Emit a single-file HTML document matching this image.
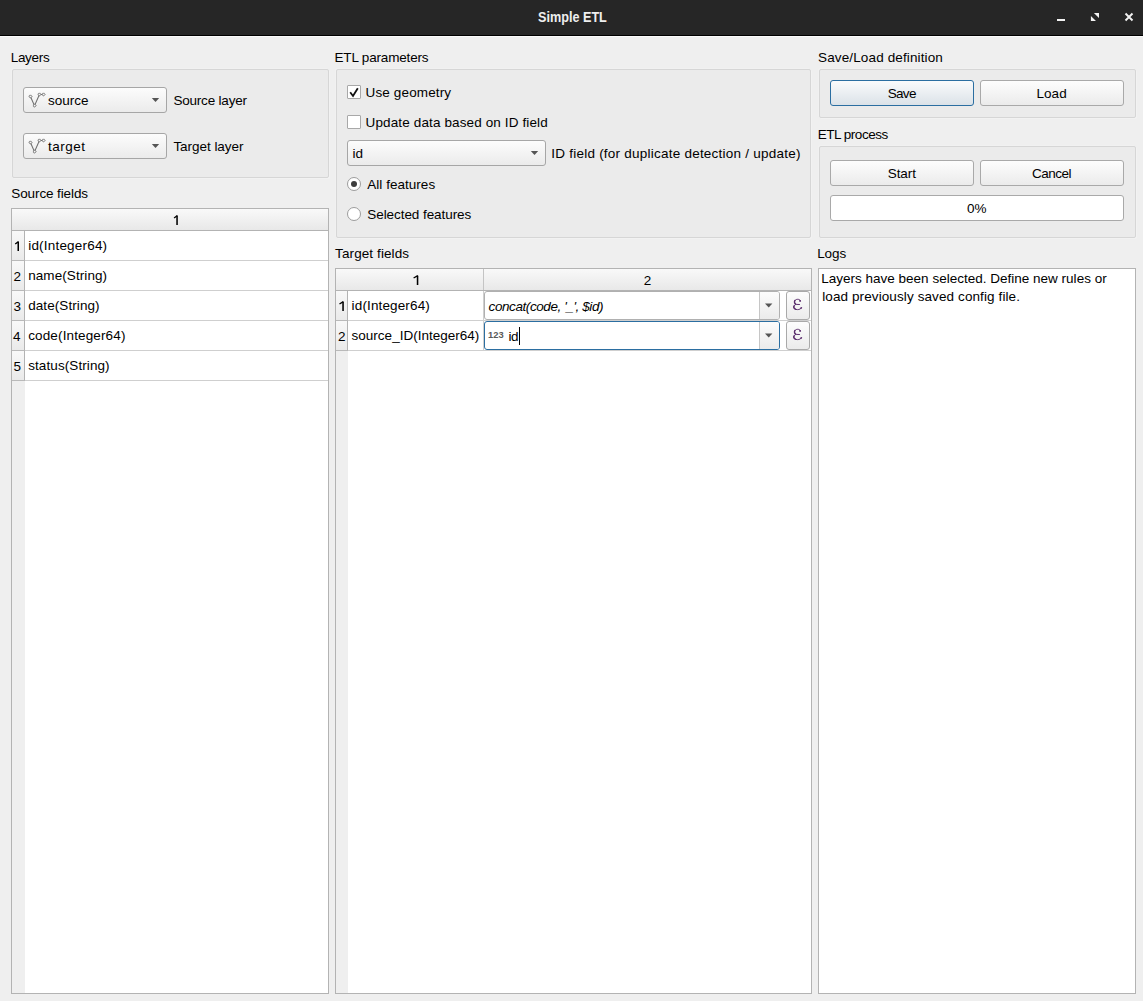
<!DOCTYPE html>
<html><head><meta charset="utf-8">
<style>
*{box-sizing:border-box;margin:0;padding:0}
html,body{width:1143px;height:1001px;overflow:hidden;background:#efefef;font-family:"Liberation Sans",sans-serif;color:#000}
.a{position:absolute}
.t{position:absolute;font-size:13.5px;line-height:16px;white-space:nowrap;color:#000}
.gb{position:absolute;background:#ebebeb;border:1px solid #d6d6d6;border-radius:2px;box-shadow:-1px -1px 0 #f1f1f1,1px 1px 0 #f2f2f2}
.combo{position:absolute;border:1px solid #a6a6a6;border-radius:3px;background:linear-gradient(#fcfcfc,#ebebeb)}
.arrow{position:absolute;width:0;height:0;border-left:4px solid transparent;border-right:4px solid transparent;border-top:4px solid #4e4e4e}
.btn{position:absolute;border:1px solid #a9a9a9;border-radius:3px;background:linear-gradient(#fdfdfd,#ebebeb)}
.chk{position:absolute;width:14px;height:14px;border:1px solid #a8a8a8;border-radius:1px;background:#fff}
.radio{position:absolute;width:14px;height:14px;border:1px solid #9c9c9c;border-radius:50%;background:#fff}
.tbl{position:absolute;border:1px solid #b3b3b3;background:#fff}
.hdr{position:absolute;background:linear-gradient(#f9f9f9,#e8e8e8);border-bottom:1px solid #b3b3b3}
.rh{position:absolute;background:linear-gradient(#f8f8f8,#eaeaea);border-right:1px solid #b3b3b3;border-bottom:1px solid #b9b9b9}
.hl{position:absolute;height:1px;background:#cfcfcf}
.vl{position:absolute;width:1px;background:#cfcfcf}
</style></head><body>
<div class="a" style="left:0;top:0;width:1143px;height:35px;background:#262626"></div>
<div class="a" style="left:0;top:35px;width:1143px;height:1px;background:#000"></div>
<div class="a" style="left:0;top:36px;width:1143px;height:1px;background:#fbfbfb"></div>
<div class="t" style="left:538.30px;top:9px;font-size:15px;line-height:16px;transform:scaleX(0.8428);transform-origin:0.00px 0;font-weight:bold;color:#eeeeee;">Simple ETL</div>
<div class="a" style="left:1057px;top:19px;width:8px;height:2px;background:#f2f2f2"></div>
<svg class="a" style="left:1090px;top:12px" width="10" height="10" viewBox="0 0 10 10"><path d="M3.9 1.1H9V6.1Z M0.9 3.9V8.9H6Z" fill="#f4f4f4"/></svg>
<svg class="a" style="left:1124px;top:12px" width="10" height="10" viewBox="0 0 10 10"><path d="M1.5 1.5L8.5 8.5M8.5 1.5L1.5 8.5" stroke="#f2f2f2" stroke-width="1.9" fill="none"/></svg>
<div class="t" style="left:10.70px;top:50px;font-size:13.5px;line-height:16px;letter-spacing:-0.294px;">Layers</div>
<div class="gb" style="left:12px;top:69px;width:317px;height:109px"></div>
<div class="combo" style="left:23px;top:87px;width:144px;height:26px"></div>
<svg class="a" style="left:28px;top:92px" width="18" height="16" viewBox="0 0 18 16"><path d="M2.44 4.44L6.5 13.6L11.44 2.44L15.5 2.44" stroke="#6e6e6e" stroke-width="1.05" fill="none"/><path d="M0.89 4.44L2.44 2.89L3.99 4.44L2.44 5.99ZM4.95 13.60L6.50 12.05L8.05 13.60L6.50 15.15ZM9.89 2.44L11.44 0.89L12.99 2.44L11.44 3.99ZM13.95 2.44L15.50 0.89L17.05 2.44L15.50 3.99Z" stroke="#6e6e6e" stroke-width="1" fill="#f6f6f6"/></svg>
<div class="t" style="left:48.10px;top:93px;font-size:13.5px;line-height:16px;letter-spacing:-0.002px;">source</div>
<svg class="a" style="left:150px;top:96px" width="10" height="7"><path d="M1.80 1.95H9.20L5.50 6.05Z" fill="#555555"/></svg>
<div class="t" style="left:173.40px;top:93px;font-size:13.5px;line-height:16px;letter-spacing:-0.199px;">Source layer</div>
<div class="combo" style="left:23px;top:133px;width:144px;height:26px"></div>
<svg class="a" style="left:28px;top:138px" width="18" height="16" viewBox="0 0 18 16"><path d="M2.44 4.44L6.5 13.6L11.44 2.44L15.5 2.44" stroke="#6e6e6e" stroke-width="1.05" fill="none"/><path d="M0.89 4.44L2.44 2.89L3.99 4.44L2.44 5.99ZM4.95 13.60L6.50 12.05L8.05 13.60L6.50 15.15ZM9.89 2.44L11.44 0.89L12.99 2.44L11.44 3.99ZM13.95 2.44L15.50 0.89L17.05 2.44L15.50 3.99Z" stroke="#6e6e6e" stroke-width="1" fill="#f6f6f6"/></svg>
<div class="t" style="left:48.10px;top:139px;font-size:13.5px;line-height:16px;letter-spacing:0.466px;">target</div>
<svg class="a" style="left:150px;top:142px" width="10" height="7"><path d="M1.80 1.95H9.20L5.50 6.05Z" fill="#555555"/></svg>
<div class="t" style="left:173.40px;top:139px;font-size:13.5px;line-height:16px;letter-spacing:-0.040px;">Target layer</div>
<div class="t" style="left:11.30px;top:186px;font-size:13.5px;line-height:16px;letter-spacing:-0.108px;">Source fields</div>
<div class="tbl" style="left:11px;top:208px;width:318px;height:786px"></div>
<div class="a" style="left:12px;top:231px;width:13px;height:762px;background:#efefef"></div>
<div class="hdr" style="left:12px;top:209px;width:316px;height:22px"></div>
<svg class="a" style="left:172px;top:214px" width="9" height="13"><path d="M5.05 1.70V11.00" stroke="#000" stroke-width="1.55" fill="none"/><path d="M2.10 4.00L5.35 1.60" stroke="#000" stroke-width="1.3" fill="none"/></svg>
<div class="rh" style="left:12px;top:231px;width:13px;height:30px"></div>
<div class="hl" style="left:25px;top:260px;width:303px"></div>
<svg class="a" style="left:13px;top:240px" width="9" height="13"><path d="M5.25 1.70V11.00" stroke="#000" stroke-width="1.55" fill="none"/><path d="M2.20 4.00L5.55 1.60" stroke="#000" stroke-width="1.3" fill="none"/></svg>
<div class="t" style="left:28.20px;top:238px;font-size:13.5px;line-height:16px;letter-spacing:0.196px;">id(Integer64)</div>
<div class="rh" style="left:12px;top:261px;width:13px;height:30px"></div>
<div class="hl" style="left:25px;top:290px;width:303px"></div>
<div class="t" style="left:13.55px;top:269px;font-size:13.5px;line-height:16px;">2</div>
<div class="t" style="left:28.20px;top:268px;font-size:13.5px;line-height:16px;letter-spacing:0.079px;">name(String)</div>
<div class="rh" style="left:12px;top:291px;width:13px;height:30px"></div>
<div class="hl" style="left:25px;top:320px;width:303px"></div>
<div class="t" style="left:13.55px;top:299px;font-size:13.5px;line-height:16px;">3</div>
<div class="t" style="left:28.20px;top:298px;font-size:13.5px;line-height:16px;letter-spacing:0.078px;">date(String)</div>
<div class="rh" style="left:12px;top:321px;width:13px;height:30px"></div>
<div class="hl" style="left:25px;top:350px;width:303px"></div>
<div class="t" style="left:13.05px;top:329px;font-size:13.5px;line-height:16px;">4</div>
<div class="t" style="left:28.20px;top:328px;font-size:13.5px;line-height:16px;letter-spacing:0.135px;">code(Integer64)</div>
<div class="rh" style="left:12px;top:351px;width:13px;height:30px"></div>
<div class="hl" style="left:25px;top:380px;width:303px"></div>
<div class="t" style="left:13.55px;top:359px;font-size:13.5px;line-height:16px;">5</div>
<div class="t" style="left:28.20px;top:358px;font-size:13.5px;line-height:16px;letter-spacing:0.086px;">status(String)</div>
<div class="t" style="left:334.50px;top:50px;font-size:13.5px;line-height:16px;letter-spacing:-0.172px;">ETL parameters</div>
<div class="gb" style="left:336px;top:69px;width:475px;height:169px"></div>
<div class="chk" style="left:347px;top:85px"></div>
<svg class="a" style="left:347px;top:85px" width="14" height="14" viewBox="0 0 14 14"><path d="M3.2 7.2L6 11L10.8 3.2" stroke="#111" stroke-width="1.8" fill="none"/></svg>
<div class="t" style="left:365.60px;top:85px;font-size:13.5px;line-height:16px;letter-spacing:0.129px;">Use geometry</div>
<div class="chk" style="left:347px;top:115px"></div>
<div class="t" style="left:365.60px;top:115px;font-size:13.5px;line-height:16px;letter-spacing:0.124px;">Update data based on ID field</div>
<div class="combo" style="left:347px;top:140px;width:199px;height:26px"></div>
<div class="t" style="left:352.50px;top:146px;font-size:13.5px;line-height:16px;">id</div>
<svg class="a" style="left:529px;top:149px" width="10" height="7"><path d="M1.80 1.90H9.20L5.50 6.00Z" fill="#555555"/></svg>
<div class="t" style="left:551.30px;top:146px;font-size:13.5px;line-height:16px;letter-spacing:0.231px;">ID field (for duplicate detection / update)</div>
<div class="radio" style="left:347px;top:177px"></div>
<div class="a" style="left:351px;top:181px;width:6px;height:6px;border-radius:50%;background:#3d3d3d"></div>
<div class="t" style="left:367.30px;top:177px;font-size:13.5px;line-height:16px;letter-spacing:0.029px;">All features</div>
<div class="radio" style="left:347px;top:207px"></div>
<div class="t" style="left:367.30px;top:207px;font-size:13.5px;line-height:16px;letter-spacing:-0.070px;">Selected features</div>
<div class="t" style="left:335.10px;top:246px;font-size:13.5px;line-height:16px;letter-spacing:0.097px;">Target fields</div>
<div class="tbl" style="left:335px;top:268px;width:477px;height:726px"></div>
<div class="a" style="left:336px;top:291px;width:12px;height:702px;background:#efefef"></div>
<div class="hdr" style="left:336px;top:269px;width:475px;height:22px"></div>
<div class="vl" style="left:483px;top:269px;height:21px;background:#c4c4c4"></div>
<svg class="a" style="left:412px;top:274px" width="9" height="13"><path d="M5.55 1.70V11.00" stroke="#000" stroke-width="1.55" fill="none"/><path d="M1.60 4.00L5.85 1.60" stroke="#000" stroke-width="1.3" fill="none"/></svg>
<div class="t" style="left:643.80px;top:273px;font-size:13.5px;line-height:16px;">2</div>
<div class="rh" style="left:336px;top:291px;width:12px;height:30px"></div>
<div class="hl" style="left:348px;top:320px;width:463px"></div>
<div class="vl" style="left:483px;top:291px;height:29px"></div>
<svg class="a" style="left:338px;top:300px" width="9" height="13"><path d="M5.05 1.70V11.00" stroke="#000" stroke-width="1.55" fill="none"/><path d="M1.50 4.00L5.35 1.60" stroke="#000" stroke-width="1.3" fill="none"/></svg>
<div class="t" style="left:351.60px;top:298px;font-size:13.5px;line-height:16px;letter-spacing:0.138px;">id(Integer64)</div>
<div class="rh" style="left:336px;top:321px;width:12px;height:30px"></div>
<div class="hl" style="left:348px;top:350px;width:463px"></div>
<div class="vl" style="left:483px;top:321px;height:29px"></div>
<div class="t" style="left:338.00px;top:329px;font-size:13.5px;line-height:16px;">2</div>
<div class="t" style="left:351.60px;top:328px;font-size:13.5px;line-height:16px;letter-spacing:0.002px;">source_ID(Integer64)</div>
<div class="a" style="left:484px;top:291px;width:296px;height:29px;border:1px solid #b0b0b0;border-radius:3px;background:#fff"></div>
<div class="a" style="left:759px;top:292px;width:20px;height:27px;border-left:1px solid #c6c6c6;border-radius:0 2px 2px 0;background:linear-gradient(#fcfcfc,#ebebeb)"></div>
<svg class="a" style="left:764px;top:302px" width="10" height="7"><path d="M1.00 1.40H8.40L4.70 5.50Z" fill="#555555"/></svg>
<div class="t" style="left:488.60px;top:299px;font-size:13.5px;line-height:16px;letter-spacing:-0.420px;font-style:italic;">concat(code, '_', $id)</div>
<div class="btn" style="left:786px;top:291px;width:24px;height:29px"></div>
<svg class="a" style="left:792px;top:297px" width="12" height="15" viewBox="0 0 12 15"><path d="M8.5 4.1C8 2.8 7 2.3 5.7 2.3C3.7 2.3 2.4 3.5 2.4 5C2.4 6.4 3.3 7.3 4.4 7.4L7.9 7.5M4.4 7.4C2.7 7.6 1.7 8.6 1.7 10C1.7 11.6 3.4 12.6 5.5 12.6C7.4 12.6 8.8 11.8 9.6 10.6" stroke="#5c2e6e" stroke-width="1.0" fill="none"/><path d="M2.9 3.6C2.6 4 2.5 4.5 2.5 5C2.5 5.9 3 6.6 3.6 7M2.2 8.9C1.9 9.3 1.8 9.6 1.8 10C1.8 11 2.4 11.8 3.4 12.2" stroke="#5c2e6e" stroke-width="1.4" fill="none" stroke-linecap="round"/><circle cx="8.1" cy="3.9" r="0.95" fill="#5a2b6c"/><circle cx="9.2" cy="10.9" r="0.85" fill="#5a2b6c"/></svg>
<div class="a" style="left:484px;top:321px;width:296px;height:29px;border:1px solid #2b6ea1;border-radius:3px;background:#fff"></div>
<div class="a" style="left:759px;top:322px;width:20px;height:27px;border-left:1px solid #c6c6c6;border-radius:0 2px 2px 0;background:linear-gradient(#fcfcfc,#ebebeb)"></div>
<svg class="a" style="left:764px;top:332px" width="10" height="7"><path d="M1.00 1.40H8.40L4.70 5.50Z" fill="#555555"/></svg>
<div class="t" style="left:488.30px;top:327px;font-size:9.4px;line-height:16px;transform:scaleX(0.9982);transform-origin:0.00px 0;font-weight:bold;color:#5a5a5a;">123</div>
<div class="t" style="left:508.40px;top:329px;font-size:13.5px;line-height:16px;letter-spacing:-0.299px;">id</div>
<div class="a" style="left:519px;top:327px;width:1px;height:18px;background:#000"></div>
<div class="btn" style="left:786px;top:321px;width:24px;height:29px"></div>
<svg class="a" style="left:792px;top:327px" width="12" height="15" viewBox="0 0 12 15"><path d="M8.5 4.1C8 2.8 7 2.3 5.7 2.3C3.7 2.3 2.4 3.5 2.4 5C2.4 6.4 3.3 7.3 4.4 7.4L7.9 7.5M4.4 7.4C2.7 7.6 1.7 8.6 1.7 10C1.7 11.6 3.4 12.6 5.5 12.6C7.4 12.6 8.8 11.8 9.6 10.6" stroke="#5c2e6e" stroke-width="1.0" fill="none"/><path d="M2.9 3.6C2.6 4 2.5 4.5 2.5 5C2.5 5.9 3 6.6 3.6 7M2.2 8.9C1.9 9.3 1.8 9.6 1.8 10C1.8 11 2.4 11.8 3.4 12.2" stroke="#5c2e6e" stroke-width="1.4" fill="none" stroke-linecap="round"/><circle cx="8.1" cy="3.9" r="0.95" fill="#5a2b6c"/><circle cx="9.2" cy="10.9" r="0.85" fill="#5a2b6c"/></svg>
<div class="t" style="left:818.10px;top:50px;font-size:13.5px;line-height:16px;letter-spacing:0.124px;">Save/Load definition</div>
<div class="gb" style="left:819px;top:69px;width:317px;height:49px"></div>
<div class="a" style="left:830px;top:80px;width:144px;height:26px;border:1px solid #2b6ea1;border-radius:3px;background:linear-gradient(#fafbfc,#dbe2e8)"></div>
<div class="t" style="left:887.70px;top:86px;font-size:13.5px;line-height:16px;letter-spacing:-0.687px;">Save</div>
<div class="btn" style="left:980px;top:80px;width:144px;height:26px"></div>
<div class="t" style="left:1036.40px;top:86px;font-size:13.5px;line-height:16px;letter-spacing:0.092px;">Load</div>
<div class="t" style="left:817.70px;top:127px;font-size:13.5px;line-height:16px;letter-spacing:-0.473px;">ETL process</div>
<div class="gb" style="left:819px;top:146px;width:317px;height:92px"></div>
<div class="btn" style="left:830px;top:160px;width:144px;height:26px"></div>
<div class="t" style="left:887.70px;top:166px;font-size:13.5px;line-height:16px;letter-spacing:-0.040px;">Start</div>
<div class="btn" style="left:980px;top:160px;width:144px;height:26px"></div>
<div class="t" style="left:1032.00px;top:166px;font-size:13.5px;line-height:16px;letter-spacing:-0.485px;">Cancel</div>
<div class="a" style="left:830px;top:195px;width:294px;height:26px;border:1px solid #a9a9a9;border-radius:3px;background:#fff"></div>
<div class="t" style="left:966.90px;top:201px;font-size:13.5px;line-height:16px;">0%</div>
<div class="t" style="left:817.20px;top:246px;font-size:13.5px;line-height:16px;letter-spacing:-0.108px;">Logs</div>
<div class="tbl" style="left:818px;top:268px;width:318px;height:726px"></div>
<div class="t" style="left:821.20px;top:271px;font-size:13.5px;line-height:16px;letter-spacing:0.007px;">Layers have been selected. Define new rules or</div>
<div class="t" style="left:822.20px;top:289px;font-size:13.5px;line-height:16px;letter-spacing:0.103px;">load previously saved config file.</div>
</body></html>
